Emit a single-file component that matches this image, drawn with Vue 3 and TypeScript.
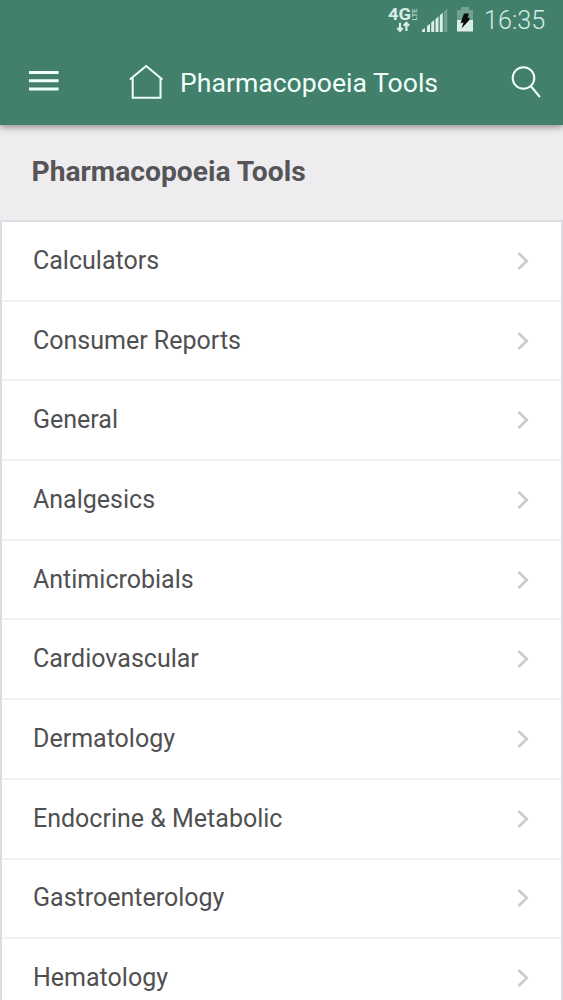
<script setup lang="ts">
const categories: string[] = [
  'Calculators',
  'Consumer Reports',
  'General',
  'Analgesics',
  'Antimicrobials',
  'Cardiovascular',
  'Dermatology',
  'Endocrine & Metabolic',
  'Gastroenterology',
  'Hematology',
]
</script>

<template>
  <div class="screen">
    <header class="top">
      <div class="status">
        <svg class="network" width="30" height="36" viewBox="0 0 30 36">
          <text class="gen" x="0" y="20.4" textLength="23" lengthAdjust="spacingAndGlyphs">4G</text>
          <text class="lte" transform="translate(28.8 20.4) rotate(-90)" textLength="12" lengthAdjust="spacingAndGlyphs">LTE</text>
          <path class="arrows" d="M12 22.8v8M9.3 28.1l2.7 2.9 2.7-2.9M18.4 31v-8M15.7 25.8l2.7-2.9 2.7 2.9" />
        </svg>
        <svg class="signal" width="26" height="25" viewBox="0 0 26 25">
          <path class="lit" d="M0 24v-2l3-2v4zM5 24v-6l3-2.2V24zM9.2 24v-9.5l3-2.5v12zM13.5 24V11l3-2.5V24zM17.8 24V7.2l3-2.5V24z" />
          <path class="dim" d="M22 24V3.5l3.3-2.7V24z" />
        </svg>
        <svg class="battery" width="16" height="25" viewBox="0 0 16 25">
          <path class="dim" d="M4 0h8v3h4v10H0V3h4z" />
          <path class="lit" d="M0 13h16v11.5H0z" />
          <path class="bolt" d="M7 6.5h5L10.5 11l2.2-.5-.5 2.8-7.7 8.2 2-6-3 .8z" />
        </svg>
        <span class="clock">16:35</span>
      </div>
      <nav class="bar">
        <svg class="menu" width="30" height="22" viewBox="0 0 30 22">
          <path d="M0 2.5h29.6M0 10.8h29.6M0 19.1h29.6" />
        </svg>
        <svg class="home" width="36" height="36" viewBox="0 0 36 36">
          <path d="M1.8 15.5 18.2 2l16.2 13.5M4.7 14v19.7h27.8V14" />
        </svg>
        <span class="title">Pharmacopoeia Tools</span>
        <svg class="search" width="32" height="34" viewBox="0 0 32 34">
          <circle cx="12.5" cy="13" r="10.8" />
          <path d="m19.7 21 9.2 11" />
        </svg>
      </nav>
    </header>
    <h1 class="heading">Pharmacopoeia Tools</h1>
    <ul class="list">
      <li v-for="name in categories" :key="name" class="row">
        <span class="label">{{ name }}</span>
        <svg class="chevron" width="12" height="20" viewBox="0 0 12 20">
          <path d="m1.5 2 8.3 8-8.3 8" />
        </svg>
      </li>
    </ul>
  </div>
</template>

<style>
body { margin: 0; overflow: hidden; }
</style>

<style scoped>
.screen {
  width: 563px;
  height: 1000px;
  overflow: hidden;
  background: #eeecef;
  font-family: Roboto, "Liberation Sans", sans-serif;
  color: #505052;
}
svg { display: block; flex: none; fill: none; }
.top {
  position: relative;
  height: 125px;
  background: #43806c;
  box-shadow: 0 2px 7px rgba(0, 0, 0, 0.42);
}
.status {
  display: flex;
  height: 40px;
  padding-left: 388px;
}
.gen { font-size: 16.5px; font-weight: 700; fill: #d7eee5; }
.lte { font-size: 7.5px; font-weight: 500; fill: #b4d6c9; }
.arrows { stroke: #d7eee5; stroke-width: 2.2; }
.signal { margin: 8px 0 0 4px; }
.battery { margin: 7px 0 0 9px; }
.lit { fill: #d9eee6; }
.dim { fill: #71a18f; }
.bolt { fill: #070c0a; }
.clock {
  margin-left: 11px;
  font-size: 25.2px;
  line-height: 42px;
  font-weight: 300;
  color: #d5ede4;
  white-space: nowrap;
}
.bar {
  display: flex;
  align-items: center;
  height: 85px;
}
.bar svg { stroke: #effff9; stroke-width: 2; }
.bar .menu { margin: -4px 0 0 29px; stroke-width: 3; }
.bar .home { margin: -2px 0 0 69px; }
.title {
  width: 331px;
  margin-left: 16px;
  font-size: 26.6px;
  line-height: 32px;
  color: #f0fff9;
  white-space: nowrap;
}
.bar .search { margin-top: -2px; }
.heading {
  height: 95px;
  margin: 0;
  padding-left: 31.5px;
  font-size: 28.2px;
  line-height: 94px;
  font-weight: 700;
  color: #555457;
}
.list {
  margin: 0;
  padding: 0;
  border: 2px solid #dedce1;
  border-bottom: 0;
  background: #fff;
  list-style: none;
}
.row {
  display: flex;
  box-sizing: border-box;
  height: 79.7px;
  align-items: center;
  justify-content: space-between;
  padding: 0 32px 0 31px;
  border-bottom: 2px solid #f1f1f2;
}
.label {
  font-size: 25px;
  line-height: 32px;
}
.chevron { stroke: #cbcbcc; stroke-width: 2.6; }
</style>
